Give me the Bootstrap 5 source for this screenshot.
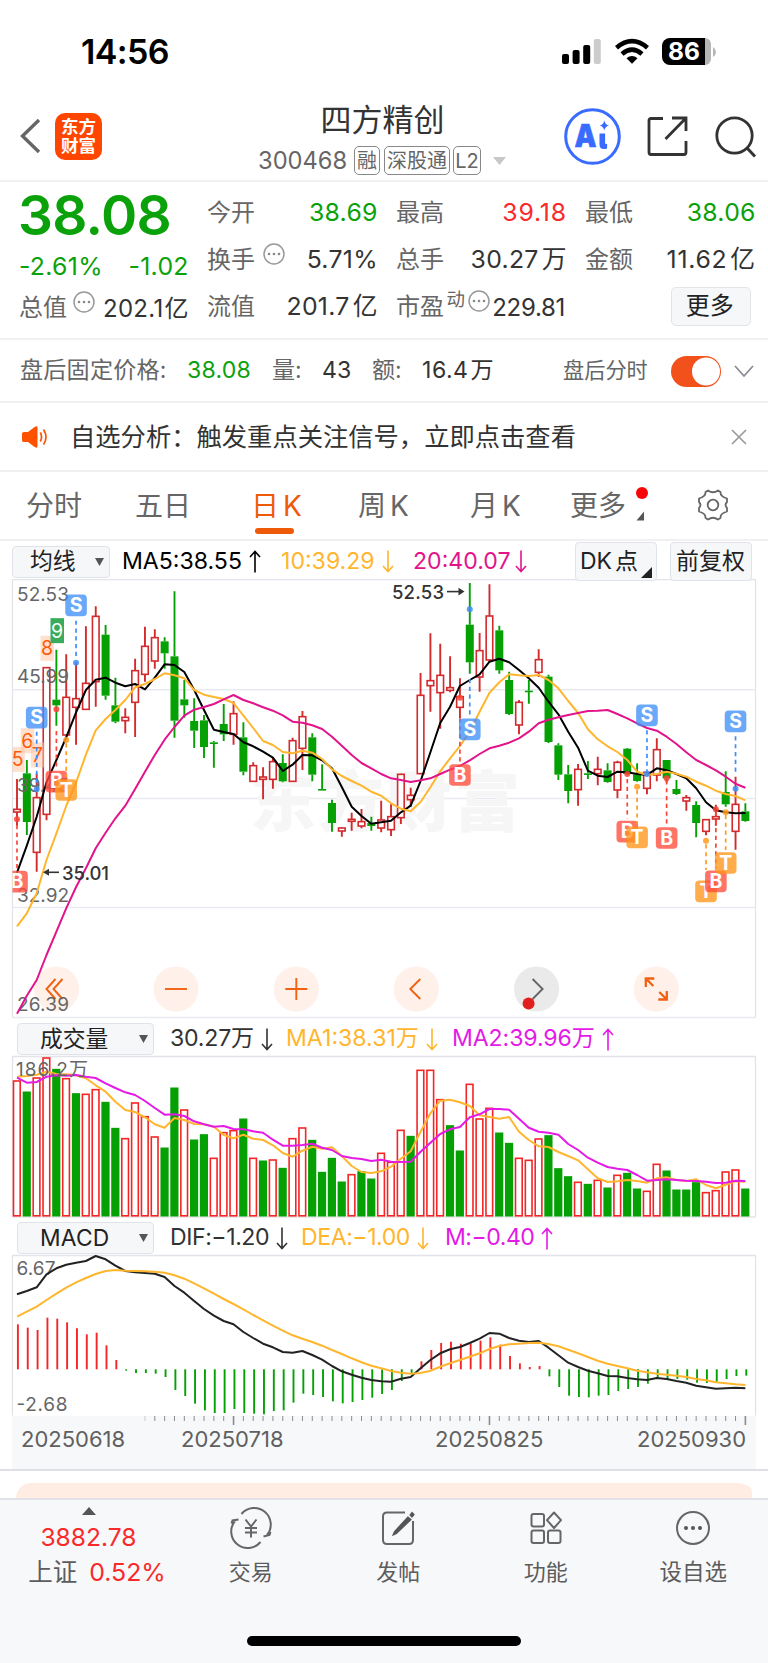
<!DOCTYPE html>
<html lang="zh-CN">
<head>
<meta charset="utf-8">
<meta name="viewport" content="width=device-width, initial-scale=1">
<title>四方精创 300468</title>
<link rel="stylesheet" href="https://cdn.jsdelivr.net/npm/bootstrap@5.3.0/dist/css/bootstrap.min.css">
<style>
  :root{--up:#f92a2a;--down:#0aa10a;--ink:#333;--dim:#666;--brand:#ee5a0a;--ma10:#ffb62e;--ma20:#e2148c;--mag:#e41ae6;--panel:#f6f7f9;}
  body{font-family:Inter,"Noto Sans CJK SC",sans-serif;color:var(--ink);background:#fff;width:768px;height:1663px;overflow:hidden;line-height:1;}
  svg{display:block;flex:none;overflow:visible}
  .nw,.nw *{white-space:nowrap}
  .t-down{color:var(--down)}.t-up{color:var(--up)}.t-dim{color:var(--dim)}
  .t-ma10{color:var(--ma10)}.t-ma20{color:var(--ma20)}.t-mag{color:var(--mag)}
  .hair{border-bottom:2px solid #f0f0f1}
  .status{height:102px;padding:1px 52px 0 81px}
  .clock{font-size:34px;font-weight:600;color:#000;letter-spacing:-.6px;padding-top:1px}
  .batt{width:43px;height:27px;background:#000;border-radius:8px 0 0 8px;color:#fff;font-size:24.5px;font-weight:700;padding-left:6px}
  .batt-end{width:6px;height:27px;background:#b5b5b5;border-radius:0 8px 8px 0}
  .head{height:80px;display:grid;grid-template-columns:55px 200px 255px 1fr;grid-template-rows:68px;padding-bottom:10px}
  .logo{width:47px;height:47px;border-radius:10px;background:#ff4600;color:#fff;font-weight:700;font-size:17.5px;line-height:19.5px}
  .title{font-size:31px;line-height:34px}
  .code{font-size:23.7px;padding:9px 0 0 3px;height:39px}
  .tagx{height:29px;border:1.6px solid #888;border-radius:5px;font-size:20px;padding:0 2px}
  .quote{height:158px;padding-left:18px;display:grid;grid-template-columns:repeat(4,169px);column-gap:20px}
  .quote .cell{height:47px;display:flex;align-items:center;justify-content:space-between;font-size:24.8px;letter-spacing:.3px;margin-right:-1.8px}
  .quote .lab{font-size:24px;color:var(--dim);letter-spacing:0}
  .unit{margin-left:3px}
  .price{font-size:55px;font-weight:600;height:66px;letter-spacing:-.7px}
  .morebtn{width:80px;height:39px;font-size:24px;color:#222;background:var(--panel);border:1.5px solid #e2e4e8;border-radius:5px;letter-spacing:0;padding-right:2px;padding-bottom:2px}
  .after{height:63px;display:grid;grid-template-columns:167px 85px 50px 50px 50px 141px 108px 63px 1fr;padding-left:20px;padding-top:1px;font-size:23.1px}
  .notice{height:69px;font-size:25.3px;padding:0 21px 0 21px}
  .tabsx{height:69px;display:grid;grid-template-columns:109px 116px 107px 112px 100px 126px 1fr;padding-left:26px;font-size:28px;color:var(--dim);padding-top:1px}
  .tabsx .on{color:var(--brand);position:relative}
  .tabsx .on::after{content:"";position:absolute;left:4px;top:36px;width:39px;height:6px;border-radius:3px;background:var(--brand)}
  .dotx{position:absolute;left:66px;top:-5px}
  .legend-row{display:grid;align-items:center;font-size:23.1px}
  .legend-row>div{display:flex;align-items:center;gap:7px}
  .sel{height:32px;background:var(--panel);border:1.5px solid #e1e3ea;border-radius:4px;font-size:22.8px;color:#222;justify-content:space-between}
  .lg1{height:38px;padding-left:12px;padding-top:1px;grid-template-columns:110px 159px 132px 162px 95px 81px}
  .lg2{height:38px;padding-left:17px;padding-top:2px;grid-template-columns:153px 116px 166px 200px}
  .lg3{height:38px;padding-left:17px;padding-top:2px;grid-template-columns:153px 131px 144px 200px;letter-spacing:-.45px}
  .sel2{width:137px;padding:0 5px 0 22px}
  .sq{height:39px;background:var(--panel);border:1.5px solid #e1e3ea;border-radius:4px;color:#222;padding-left:5px;font-size:23px;position:relative}
  .axis{height:53px;margin:0 12px 0 12px;background:linear-gradient(#f7f8fa,#f7f8fa) 0 0/744px 100% no-repeat;font-size:22px;color:#606060;display:grid;grid-template-columns:160px 254px 202px 1fr;padding:12px 0 0 9px}
  .peach{height:15px;margin:12px 16px 0;background:#ffede4;border-radius:26px 26px 0 0/26px 15px 0 0}
  .foot{height:167px;background:#f7f8fa;border-top:2.5px solid #e2e3e8}
  .foot .bar5{display:grid;grid-template-columns:177px repeat(4,147.5px);font-size:22px;color:#5c5c5c;height:95px}
  .foot .item{padding-top:9px;gap:14px}
  .home{width:274px;height:10px;border-radius:5px;background:#000;margin:41px auto 0 247px}
  svg text{font-family:Inter,"Noto Sans CJK SC",sans-serif}
</style>
</head>
<body class="nw">

<header>
  <div class="status d-flex align-items-center justify-content-between">
    <span class="clock">14:56</span>
    <div class="d-flex align-items-center">
      <svg width="39" height="25" style="margin-right:14px"><g fill="#000"><rect y="15" width="7" height="10" rx="2"/><rect x="10.600" y="11" width="7" height="14" rx="2"/><rect x="21.200" y="6" width="7" height="19" rx="2"/><rect x="31.800" width="7" height="25" rx="2" fill="#ccc"/></g></svg>
      <svg width="34" height="25" viewBox="0 0 34 25" style="margin-right:13px"><g fill="none" stroke="#000" stroke-width="4.600"><path d="M1.500 8.800Q17-4.400 32.500 8.800"/><path d="M7 15Q17 6.300 27 15"/></g><path d="M17 24.800l-5.500-5.600Q17 14.800 22.500 19.200z"/></svg>
      <div class="batt d-flex align-items-center">86</div><div class="batt-end"></div>
      <svg width="5" height="10"><path d="M2 0Q5 2 5 5T2 10z" fill="#b5b5b5"/></svg>
    </div>
  </div>
  <div class="head hair align-items-center">
    <svg width="55" height="36" viewBox="0 0 55 36"><path d="M39 2L22.500 18 39 34" fill="none" stroke="#666" stroke-width="3.400"/></svg>
    <div class="logo d-flex flex-column align-items-center justify-content-center"><span>东方</span><span>财富</span></div>
    <div class="d-flex flex-column align-items-center" style="padding-top:6px">
      <div class="title">四方精创</div>
      <div class="d-flex align-items-center code t-dim w-100">
        <span style="width:96px">300468</span>
        <span class="tagx d-flex align-items-center me-1">融</span><span class="tagx d-flex align-items-center" style="margin-right:3px">深股通</span><span class="tagx d-flex align-items-center justify-content-center" style="width:28px">L2</span>
        <svg width="13" height="8" style="margin-left:12px"><path d="M0 0h13L6.500 8z" fill="#c8c8c8"/></svg>
      </div>
    </div>
    <div class="d-flex align-items-center" style="padding-left:54px">
      <svg width="57" height="57" viewBox="0 0 57 57"><circle cx="28.500" cy="28.500" r="26.800" fill="none" stroke="#3a6bff" stroke-width="3"/><text x="10.500" y="39" font-size="32" font-weight="900" fill="#3a6bff" stroke="#3a6bff" stroke-width=".6" textLength="22" lengthAdjust="spacingAndGlyphs">A</text><path d="M35.500 25.500h5.600v9.500q0 1.500 2 .8v4.700q-7.600 2-7.600-4zM40.300 12.500q1 4.300 4.700 5-3.700.8-4.700 5-1-4.200-4.700-5 3.700-.700 4.700-5z" fill="#3a6bff"/></svg>
      <svg width="41" height="41" viewBox="0 0 41 41" style="margin-left:26px"><path d="M16 2.500H4Q2 2.500 2 4.500V36q0 2.500 2 2.500H37q2 0 2-2.500V25M25 2h14v13M39 2L18.500 23" fill="none" stroke="#333" stroke-width="2.800"/></svg>
      <svg width="41" height="41" viewBox="0 0 41 41" style="margin-left:27px"><circle cx="19.500" cy="19.500" r="17.700" fill="none" stroke="#333" stroke-width="2.800"/><path d="M32 32l8 8.500" stroke="#333" stroke-width="3"/></svg>
    </div>
  </div>
</header>

<section class="quote hair">
  <div>
    <div class="price t-down d-flex align-items-center">38.08</div>
    <div class="cell t-down ps-1" style="height:37px;padding-left:1px!important"><span>-2.61%</span><span>-1.02</span></div>
    <div class="cell" style="height:46px;font-size:24px;padding-left:1px"><span class="lab">总值</span><svg class="more3" width="22" height="22" style="margin:-12px 0 0 -2px"></svg><span style="margin-top:2px">202.1<span class="unit" style="margin-left:1px">亿</span></span></div>
  </div>
  <div style="padding-top:7px">
    <div class="cell"><span class="lab">今开</span><span class="t-down">38.69</span></div>
    <div class="cell"><span class="lab">换手</span><svg class="more3" width="22" height="22" style="margin:-11px 14px 0 0"></svg><span>5.71%</span></div>
    <div class="cell"><span class="lab">流值</span><span>201.7<span class="unit">亿</span></span></div>
  </div>
  <div style="padding-top:7px">
    <div class="cell"><span class="lab">最高</span><span class="t-up" style="letter-spacing:.8px">39.18</span></div>
    <div class="cell"><span class="lab">总手</span><span>30.27<span class="unit">万</span></span></div>
    <div class="cell" style="font-size:24px;margin-right:0"><span class="lab">市盈</span><span class="t-dim" style="font-size:18.500px;margin-top:-15px">动</span><svg class="more3" width="22" height="22" style="margin-top:-12px"></svg><span style="margin-top:2px;letter-spacing:-.3px">229.81</span></div>
  </div>
  <div style="padding-top:7px">
    <div class="cell"><span class="lab">最低</span><span class="t-down">38.06</span></div>
    <div class="cell"><span class="lab">金额</span><span style="letter-spacing:.7px">11.62<span class="unit">亿</span></span></div>
    <div class="cell justify-content-end" style="padding-right:5px"><div class="morebtn d-flex align-items-center justify-content-center">更多</div></div>
  </div>
</section>

<section class="after hair align-items-center">
  <span class="t-dim" style="letter-spacing:.2px">盘后固定价格:</span><span class="t-down" style="letter-spacing:.2px">38.08</span><span class="t-dim">量:</span><span>43</span><span class="t-dim">额:</span><span style="letter-spacing:.5px">16.4<span class="unit" style="margin-left:2px">万</span></span><span class="t-dim" style="font-size:21.200px">盘后分时</span>
  <svg width="50" height="31"><rect width="50" height="31" rx="15.500" fill="#f2511b"/><circle cx="35" cy="15.500" r="14" fill="#fff"/></svg>
  <svg width="20" height="12"><path d="M1 1l9 10L19 1" fill="none" stroke="#8c8c95" stroke-width="1.800"/></svg>
</section>

<section class="notice hair d-flex align-items-center">
  <svg width="27" height="22" viewBox="0 0 27 22" style="margin-right:22px"><path d="M1 7.500q0-1.500 2-1.500h4L14 .8q2.500-1.300 2.500 1v18.400q0 2.300-2.500 1L7 16H3q-2 0-2-1.500z" fill="#ff5200"/><path d="M19.300 6.500q2.500 4.500 0 9M22.500 3.500q5 7.500 0 15" fill="none" stroke="#ff5200" stroke-width="1.700"/></svg>
  <span class="flex-grow-1">自选分析：触发重点关注信号，立即点击查看</span>
  <svg width="16" height="16"><path d="M1 1l14 14M15 1L1 15" stroke="#999" stroke-width="1.600"/></svg>
</section>

<nav class="tabsx hair align-items-center">
  <span>分时</span><span>五日</span><span class="on">日<span class="ms-1">K</span></span><span>周<span class="ms-1">K</span></span><span>月<span class="ms-1">K</span></span>
  <span class="position-relative">更多<svg class="dotx" width="12" height="34"><circle cx="6" cy="6" r="6" fill="#f60606"/><path d="M8 24.500v9H.5z" fill="#555"/></svg></span>
  <svg width="34" height="34" viewBox="-17 -17 34 34" style="margin-top:-3px"><path d="M-5-14.500Q0-11 5-14.500L7.500-13Q7-8.500 14-6.500V-3Q11 0 14 3V6.500Q7 8.500 7.500 13L5 14.500Q0 11-5 14.500L-7.500 13Q-7 8.500-14 6.500V3Q-11 0-14-3V-6.500Q-7-8.500-7.500-13z" fill="none" stroke="#666" stroke-width="1.800" stroke-linejoin="round"/><circle r="5.300" fill="none" stroke="#666" stroke-width="1.800"/></svg>
</nav>

<section>
  <div class="legend-row lg1">
    <div class="sel" style="width:98px;padding:0 5px 0 17px"><span>均线</span><svg width="9" height="8"><path d="M0 0h9L4.500 8z" fill="#555"/></svg></div>
    <div class="text-black"><span>MA5:38.55</span><svg class="ar up" width="12" height="23"></svg></div>
    <div class="t-ma10"><span>10:39.29</span><svg class="ar" width="12" height="23"></svg></div>
    <div class="t-ma20"><span>20:40.07</span><svg class="ar" width="12" height="23" style="margin-left:-2px"></svg></div>
    <div class="sq" style="width:82px;gap:3px;padding-left:4px"><span>DK</span><span>点</span><svg width="11" height="11" style="position:absolute;right:4px;bottom:2px"><path d="M11 0v11H0z" fill="#222"/></svg></div>
    <div class="sq" style="width:82px"><span>前复权</span></div>
  </div>
  <svg id="kline" width="768" height="440" viewBox="0 579 768 440"></svg>
</section>

<section>
  <div class="legend-row lg2">
    <div class="sel sel2"><span>成交量</span><svg width="9" height="8"><path d="M0 0h9L4.500 8z" fill="#555"/></svg></div>
    <div><span style="letter-spacing:-.2px">30.27万</span><svg class="ar" width="12" height="23"></svg></div>
    <div class="t-ma10"><span>MA1:38.31万</span><svg class="ar" width="12" height="23"></svg></div>
    <div class="t-mag"><span style="letter-spacing:-.1px">MA2:39.96万</span><svg class="ar up" width="12" height="23"></svg></div>
  </div>
  <svg id="volume" width="768" height="161" viewBox="0 1057 768 161"></svg>
</section>

<section>
  <div class="legend-row lg3">
    <div class="sel sel2"><span style="letter-spacing:.2px">MACD</span><svg width="9" height="8"><path d="M0 0h9L4.500 8z" fill="#555"/></svg></div>
    <div><span>DIF:−1.20</span><svg class="ar" width="12" height="23"></svg></div>
    <div class="t-ma10"><span>DEA:−1.00</span><svg class="ar" width="12" height="23"></svg></div>
    <div class="t-mag"><span style="letter-spacing:-.5px">M:−0.40</span><svg class="ar up" width="12" height="23"></svg></div>
  </div>
  <svg id="macd" width="768" height="160" viewBox="0 1256 768 160"></svg>
  <div class="axis"><span>20250618</span><span>20250718</span><span>20250825</span><span>20250930</span></div>
</section>
<div style="height:2px;background:#dfdfe6"></div>
<div class="peach"></div>

<footer class="foot">
  <div class="bar5">
    <div class="d-flex flex-column align-items-center">
      <svg width="14" height="8" style="margin-top:7px"><path d="M0 8h14L7 0z" fill="#555"/></svg>
      <span class="t-up" style="font-size:24.600px;margin-top:10px">3882.78</span>
      <div class="d-flex align-items-center" style="gap:12px;margin-top:10px;padding-left:17px"><span style="font-size:24.500px">上证</span><span class="t-up" style="font-size:24.900px">0.52%</span></div>
    </div>
    <div class="item d-flex flex-column align-items-center"><svg width="40" height="38" viewBox="-20 -19 40 38"><g fill="none" stroke="#666" stroke-width="2"><path d="M-9.500-14A16.500 16.500 0 0 1 16 7M12.500 8.500l6-1.500 1-3M9.500 14A16.500 16.500 0 0 1-16-7M-12.500-8.500l-6 1-1 3"/><path d="M-5.500-8.500L0-1.500 5.500-8.500M0-1.500V9.500M-6 0H6M-6 4.500H6"/></g></svg><span>交易</span></div>
    <div class="item d-flex flex-column align-items-center"><svg width="36" height="38" viewBox="0 0 36 38"><path d="M25 3.500H7Q3 3.500 3 7.500V31Q3 35 7 35H29Q33 35 33 31V12" fill="none" stroke="#666" stroke-width="2"/><path d="M28 8L14.500 22.500 13 26l3.500-1.500L31 10.500zM30 6l2-2.500 2 2-2 2.500z" fill="#555" stroke="#555" stroke-width="1.200"/></svg><span>发帖</span></div>
    <div class="item d-flex flex-column align-items-center"><svg width="36" height="38" viewBox="0 0 36 38"><g fill="none" stroke="#666" stroke-width="2"><rect x="3.500" y="5" width="12.500" height="12.500" rx="2"/><path d="M26 3.500L33 11.200 26 19 19 11.200z" stroke-linejoin="round"/><rect x="3.500" y="21.500" width="12.500" height="12.500" rx="2"/><rect x="20" y="21.500" width="12.500" height="12.500" rx="2"/></g></svg><span>功能</span></div>
    <div class="item d-flex flex-column align-items-center"><svg width="36" height="38" viewBox="-18 -19 36 38"><circle r="16" fill="none" stroke="#666" stroke-width="2"/><g fill="#555"><circle cx="-7" r="2"/><circle r="2"/><circle cx="7" r="2"/></g></svg><span style="font-size:22.500px">设自选</span></div>
  </div>
  <div class="home"></div>
</footer>

<script src="https://cdn.jsdelivr.net/npm/bootstrap@5.3.0/dist/js/bootstrap.bundle.min.js"></script>
<script>
const X = i => 17 + i * 9.843, RED = '#d22a2d', GREEN = '#04a004';
// small reusable glyphs
document.querySelectorAll('.ar').forEach(s => s.innerHTML =
  `<path d="${s.classList.contains('up') ? 'M6 22.500V1.500M1 7L6 1.500 11 7' : 'M6 .5V21.500M1 16L6 21.500 11 16'}" fill="none" stroke="currentColor" stroke-width="1.600"/>`);
document.querySelectorAll('.more3').forEach(s => s.innerHTML =
  '<circle cx="11" cy="11" r="10" fill="none" stroke="#999" stroke-width="1.500"/><g fill="#888"><circle cx="6" cy="11" r="1.300"/><circle cx="11" cy="11" r="1.300"/><circle cx="16" cy="11" r="1.300"/></g>');

const line = (vals, y0, c, w = 2) =>
  `<polyline points="${vals.map((v, i) => X(i).toFixed(1) + ',' + (y0 + v / 3).toFixed(1)).join(' ')}" fill="none" stroke="${c}" stroke-width="${w}" stroke-linejoin="round"/>`;
const frame = (y1, y2) => `<path d="M12.500 ${y2}V${y1}H755.500V${y2}" fill="none" stroke="#e2e4ea" stroke-width="1.300"/>`;
const label = (x, y, s, len = 52) => `<text x="${x}" y="${y}" font-size="19" fill="#666" textLength="${len}" lengthAdjust="spacing">${s}</text>`;

// ---- candles: colour, high, body top, body bottom, low
const K = `r612,703,711,752 g555,595,741,780 r595,668,832,890 r278,278,718,736 g224,374,391,452 r238,367,480,480 r262,371,397,509 r154,325,403,403 r94,124,320,395 g150,179,362,374 g308,391,440,445 r400,427,437,475 r251,287,382,486 r155,214,298,320 r163,188,258,281 g187,199,235,281 g49,244,437,488 g315,373,391,428 g370,438,467,519 g420,436,516,549 g498,502,507,578 g387,447,478,498 r379,416,478,509 g442,487,590,601 r562,572,619,619 r577,606,613,673 r548,560,613,641 g538,564,619,622 r488,497,619,619 r408,425,520,585 g475,487,599,619 g568,642,646,646 g674,684,744,770 r757,759,768,785 r713,733,739,767 r702,740,753,760 g725,744,753,767 r677,735,759,772 r686,725,764,783 r596,598,728,747 r638,661,674,695 r294,361,596,596 r175,317,332,410 r206,301,353,461 r244,338,346,352 r310,365,397,430 g24,149,262,296 r174,227,306,350 r28,123,255,261 g152,166,286,296 g290,315,417,420 r375,382,450,478 g315,347,351,386 r223,254,292,306 g299,305,501,504 g505,511,599,615 g570,598,648,685 r567,583,644,692 g558,595,599,612 r545,583,596,631 g565,586,621,623 r557,562,645,670 g519,521,597,600 g565,598,618,620 r590,592,640,658 r490,524,600,619 g555,555,610,623 g615,642,657,660 r660,668,678,707 g679,690,744,787 r733,734,769,781 r689,725,732,752 g589,651,688,695 r605,688,769,824 g685,709,738,740`.split(' ');
const MA5 = [893,812,725,622,555,487,412,345,314,308,323,334,327,343,308,268,270,291,345,405,464,471,477,502,514,530,548,588,569,540,541,556,580,636,695,723,746,742,737,712,692,618,532,444,395,333,315,298,260,251,262,285,310,338,380,418,470,518,587,602,606,590,592,597,600,580,586,597,610,640,682,706,712,715,714];
const MA10 = [1054,1015,955,855,775,693,622,539,466,432,405,375,337,327,312,295,301,310,345,359,366,372,384,422,459,498,510,531,535,527,533,552,583,603,618,632,650,662,685,701,709,681,637,589,550,513,470,410,353,322,298,301,303,300,315,340,378,414,463,493,514,531,555,590,600,597,590,596,605,620,632,647,657,663,676];
const MA20 = [1316,1262,1215,1140,1070,1000,936,880,820,773,730,692,642,590,540,494,456,422,404,396,387,373,360,375,385,397,407,421,440,443,451,462,485,512,540,564,580,597,610,615,621,616,610,597,584,573,556,537,520,512,503,490,470,445,434,427,420,414,408,407,405,417,430,445,459,467,485,507,532,555,570,586,605,626,638];
const Y = v => 575 + v / 3;
let k = frame(579.6, 1018) + [689.7, 798.6, 907.6, 1017.6].map(y => `<path d="M12.500 ${y}H755.500" stroke="#e8eaf0" stroke-width="1.500"/>`).join('');
k += '<text x="250" y="826" font-size="66" font-weight="900" fill="#f6f6f7" textLength="270">东方财富</text>';
// ---- floating chart controls
const icons = [
  '<path d="M-1-10L-10 0-1 10M6-10L-3 0 6 10"/>', '<path d="M-11 0H11"/>', '<path d="M-11 0H11M0-11V11"/>', '<path d="M4-10L-6 0 4 10"/>',
  '<path d="M-4-10L6 0-4 10"/>', '<path d="M-10.500-2V-10.500H-2M-10.500-10.500L-3-3M10.500 2V10.500H2M10.500 10.500L3 3" stroke-width="2.300"/>'];
[56.5,176,296.3,416.3,536.6,656.3].forEach((x, n) => {
  k += `<g transform="translate(${x} 989)"><circle r="22.600" fill="${n === 4 ? '#d8d8d8' : '#ffe6d9'}" opacity=".55"/><g fill="none" stroke="${n === 4 ? '#666' : '#f26112'}" stroke-width="1.900">${icons[n]}</g>${n === 4 ? '<circle cx="-8" cy="14.500" r="6" fill="#e0201f"/>' : ''}</g>`;
});
k += '<clipPath id="inner"><rect x="12.500" y="579" width="743" height="440"/></clipPath><g clip-path="url(#inner)">';
K.forEach((s, i) => {
  const g = s[0] === 'g', [h, t, b, l] = s.slice(1).split(',').map(Number), x = X(i), c = g ? GREEN : RED;
  k += `<path d="M${x} ${Y(h)}V${Y(t)}M${x} ${Y(b)}V${Y(l)}" stroke="${c}" stroke-width="1.900"/>`;
  const bh = (b - t) / 3;
  k += g ? `<rect x="${x - 4}" y="${Y(t)}" width="8" height="${Math.max(bh, 1.6)}" fill="${c}"/>`
         : `<rect x="${x - 3.3}" y="${Y(t)}" width="6.600" height="${bh}" fill="#fff" stroke="${c}" stroke-width="1.600"/>`;
});
[[53,553,5],[82,497,6],[112,540,7],[141,220,8],[171,167,9]].forEach(([x, y, n]) => {
  const on = n === 9;
  k += `<rect x="${x/3 - 6.5}" y="${Y(y) - 12.5}" width="13.500" height="25" fill="${on ? '#38ab5c' : '#ffc6a4'}" opacity="${on ? 1 : .55}"/><text x="${x/3}" y="${Y(y) + 7}" font-size="19.500" text-anchor="middle" fill="${on ? '#fff' : '#ff5a0c'}">${n}</text>`;
});
k += label(17, 601, '52.53') + label(17, 682.5, '45.99') + label(17, 792, '39.45') + label(17, 901.5, '32.92') + label(17, 1011, '26.39');
k += line(MA5, 575, '#000') + line(MA10, 575, '#ffb62e') + line(MA20, 575, '#e2148c');
// ---- signals: index, type, badge centre, dot, dashed stem from / to
const C = { S: ['#3d8ef8', '#3d8ef8'], B: ['#fb4334', '#ff4a38'], T: ['#ff9a1c', '#ff9416'] };
[[0,'B',920,733,750,885],[2,'S',428,643,470,628],[4,'B',620,403,468,582],[5,'T',645,495,505,605],[6,'S',91,263,137,252],[45,'B',600,368,430,560],[46,'S',463,103,312,425],
 [62,'B',770,597,612,730],[63,'T',787,635,645,748],[64,'S',421,597,466,590],[66,'B',789,610,616,748],[70,'T',949,797,808,885],[71,'B',919,703,712,880],[72,'T',864,712,720,825],[73,'S',439,641,484,592]]
.forEach(([i, t, cy, dot, a, b]) => {
  const x = X(i), y = Y(cy);
  k += `<path d="M${x} ${Y(a)}V${Y(b)}" stroke="${C[t][0]}" stroke-width="1.700" stroke-dasharray="4.200 3.600"/><circle cx="${x}" cy="${Y(dot)}" r="3" fill="${C[t][0]}" opacity=".85"/>
  <rect x="${x-10.8}" y="${y-10.8}" width="21.600" height="21.600" rx="4" fill="${C[t][1]}" opacity=".77"/><text x="${x}" y="${y+6.800}" font-size="19.500" font-weight="700" fill="#fff" text-anchor="middle">${t}</text>`;
});
k += '</g>';
k += `<text x="62" y="879.500" font-size="18.500" font-weight="500" fill="#333" textLength="47">35.01</text><path d="M59 872.300H46" stroke="#333" stroke-width="1.600"/><path d="M43 872.300l6-3.500v7z" fill="#333"/>`;
k += `<text x="392" y="598.500" font-size="18.500" font-weight="500" fill="#333" textLength="52">52.53</text><path d="M447 591.600H461" stroke="#333" stroke-width="1.600"/><path d="M464.500 591.600l-6-3.800v7.600z" fill="#333"/>`;
document.getElementById('kline').innerHTML = k;

// ---- volume
const V = 'r183 g216 r174 r114 g148 r176 g221 r223 r209 g247 g325 r356 r249 r290 r351 g384 g204 r270 g360 g344 r415 r338 r332 g297 r415 g423 r420 g445 r356 r324 g361 g457 g415 g486 r464 g455 g477 r400 r427 r331 g349 r151 r151 r239 g317 g393 r193 r297 r265 g339 g370 r415 r421 r357 g347 g446 g470 r487 g493 r481 g504 r466 g460 g507 r514 r433 g453 g510 g510 g488 r518 r512 r456 r450 g507'.split(' ');
const V1 = [170,168,164,155,162,163,166,175,196,215,245,270,276,292,313,323,294,300,312,313,320,345,355,344,356,360,376,399,410,392,380,386,382,408,438,456,459,454,440,416,394,335,280,242,239,247,258,286,291,296,291,335,360,379,381,396,408,421,448,475,486,484,480,483,488,475,472,480,483,478,495,505,494,484,485];
const V2 = [173,188,186,170,166,167,165,170,174,190,204,217,225,243,264,284,283,288,304,313,320,318,327,328,334,338,359,377,377,375,371,383,390,408,414,417,423,419,425,426,425,395,368,342,328,321,292,283,267,267,269,296,323,335,338,344,372,390,413,428,441,446,450,465,482,480,478,480,482,483,485,489,488,482,483];
let v = frame(1056.5, 1217) + '<path d="M12.500 1217H755.500" stroke="#e2e4ea" stroke-width="1.300"/>';
V.forEach((s, i) => {
  const y = 1020 + s.slice(1) / 3, x = X(i) - .2;
  v += s[0] === 'g' ? `<rect x="${x-4}" y="${y-.5}" width="8.200" height="${1217-y}" fill="${GREEN}"/>`
    : `<rect x="${x-3.3}" y="${y}" width="6.700" height="${1215.8-y}" fill="#fff" stroke="#f52525" stroke-width="1.600"/>`;
});
v += line(V1, 1020, '#ffb62e') + line(V2, 1020, '#e41ae6');
v += '<text x="16" y="1076" font-size="19" fill="#666" textLength="72">186.2万</text>';
document.getElementById('volume').innerHTML = v;

// ---- MACD
const M = [313,323,330,293,296,307,325,343,338,376,420,452,459,459,461,471,510,528,551,571,579,579,567,579,581,583,573,571,548,521,525,531,544,550,546,540,533,522,510,483,459,424,390,369,365,371,370,362,352,374,408,430,441,438,469,501,527,531,532,527,525,513,507,501,491,475,477,477,479,488,489,485,477,468,467];
const DIF = [223,213,202,163,145,134,128,123,108,118,137,153,157,159,161,171,198,218,243,267,287,303,313,336,354,371,382,396,398,393,405,419,438,454,464,473,480,484,485,476,471,445,420,400,388,381,369,356,339,341,354,362,366,363,383,406,428,441,452,460,468,469,474,478,480,474,477,483,488,497,502,506,505,503,505];
const DEA = [290,275,260,240,221,203,187,174,162,153,150,152,153,154,155,158,166,176,190,205,221,237,252,268,285,301,317,332,346,356,366,377,390,402,415,427,437,445,453,458,461,459,452,440,430,420,410,400,387,378,373,371,369,368,372,379,389,400,411,422,431,438,445,452,457,461,464,467,471,477,481,487,490,493,495];
let m = frame(1255.5, 1415.5);
M.forEach((q, i) => m += `<path d="M${X(i)+.9} ${1369.3}V${1220 + q/3}" stroke="${q < 448 ? '#f52525' : GREEN}" stroke-width="1.900"/>`);
m += label(16.5, 1275, '6.67', 39) + label(16.5, 1411, '-2.68', 51);
m += line(DIF, 1220, '#222') + line(DEA, 1220, '#ffb62e');
for (let i = 13; i < 75; i++) { const big = i === 22 || i === 48 || i === 74; m += `<path d="M${X(i)} 1416V${big ? 1425 : 1421}" stroke="#8c8c8c" stroke-width="${big ? 1.6 : 1}" opacity="${i === 13 ? .4 : 1}"/>`; }
const ms = document.getElementById('macd'); ms.innerHTML = m; ms.style.position = 'relative';
</script>
</body>
</html>
